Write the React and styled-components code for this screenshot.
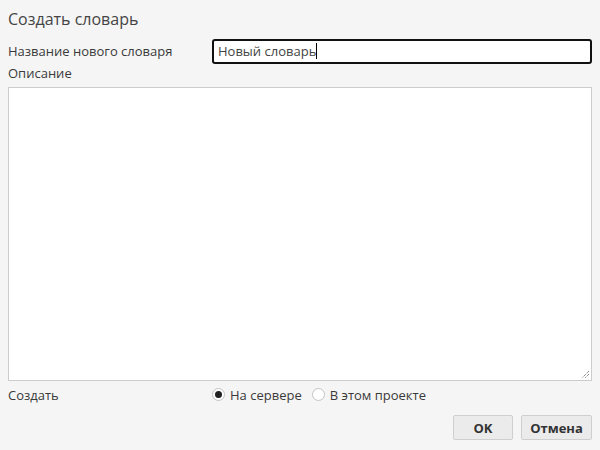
import React from "react";
import styled, { createGlobalStyle } from "styled-components";

const Global = createGlobalStyle`
  html, body {
    margin: 0;
    padding: 0;
    background: #f5f5f5;
  }
  * { box-sizing: border-box; }
`;

const Dialog = styled.div`
  width: 600px;
  height: 450px;
  background: #f5f5f5;
  font-family: "Open Sans", "Liberation Sans", sans-serif;
  font-size: 13px;
  color: #3a3a3a;
  padding: 0 8px;
  display: flex;
  flex-direction: column;
`;

const Title = styled.h1`
  margin: 0;
  font-size: 16px;
  font-weight: 400;
  color: #444;
  height: 38px;
  line-height: 38px;
`;

const Row = styled.div`
  display: grid;
  grid-template-columns: 204px 1fr;
  align-items: center;
  height: ${(p) => p.h || 26}px;
`;

const Label = styled.div`
  line-height: 18px;
`;

const NameInput = styled.div`
  height: 25px;
  border: 2px solid #111;
  border-radius: 3px;
  background: #fff;
  padding: 0 4px;
  display: flex;
  align-items: center;
  color: #444;
`;

const Caret = styled.span`
  display: inline-block;
  width: 1px;
  height: 16px;
  background: #000;
`;

const DescLabel = styled.div`
  height: 23px;
  line-height: 19px;
`;

const TextArea = styled.div`
  position: relative;
  height: 294px;
  background: #fff;
  border: 1px solid #ccc;
`;

const Grip = styled.svg`
  position: absolute;
  right: 1px;
  bottom: 1px;
`;

const Radios = styled.div`
  display: flex;
  align-items: center;
  gap: 10px;
`;

const RadioItem = styled.label`
  display: flex;
  align-items: center;
  gap: 5px;
`;

const Circle = styled.span`
  width: 13px;
  height: 13px;
  border-radius: 50%;
  border: 1px solid #c4c4c4;
  background: #fff;
  display: flex;
  align-items: center;
  justify-content: center;
  &::after {
    content: "";
    width: 7px;
    height: 7px;
    border-radius: 50%;
    background: ${(p) => (p.checked ? "#222" : "transparent")};
  }
`;

const Footer = styled.div`
  display: flex;
  justify-content: flex-end;
  gap: 8px;
  padding-top: 7px;
`;

const Button = styled.button`
  font-family: inherit;
  font-size: 13px;
  font-weight: 700;
  color: #333;
  background: #ebebeb;
  border: 1px solid #cfcfcf;
  border-radius: 2px;
  height: 25px;
  width: ${(p) => p.w}px;
  padding: 0;
`;

export default function App() {
  return (
    <>
      <Global />
      <Dialog>
        <Title>Создать словарь</Title>
        <Row h={26}>
          <Label>Название нового словаря</Label>
          <NameInput>
            Новый словарь
            <Caret />
          </NameInput>
        </Row>
        <DescLabel>Описание</DescLabel>
        <TextArea>
          <Grip width="10" height="10" viewBox="0 0 10 10">
            <path d="M9 2L2 9M9 5L5 9" stroke="#555" strokeWidth="1" strokeDasharray="1 1" />
          </Grip>
        </TextArea>
        <Row h={27}>
          <Label>Создать</Label>
          <Radios>
            <RadioItem>
              <Circle checked />
              На сервере
            </RadioItem>
            <RadioItem>
              <Circle />
              В этом проекте
            </RadioItem>
          </Radios>
        </Row>
        <Footer>
          <Button w={60}>OK</Button>
          <Button w={71}>Отмена</Button>
        </Footer>
      </Dialog>
    </>
  );
}
